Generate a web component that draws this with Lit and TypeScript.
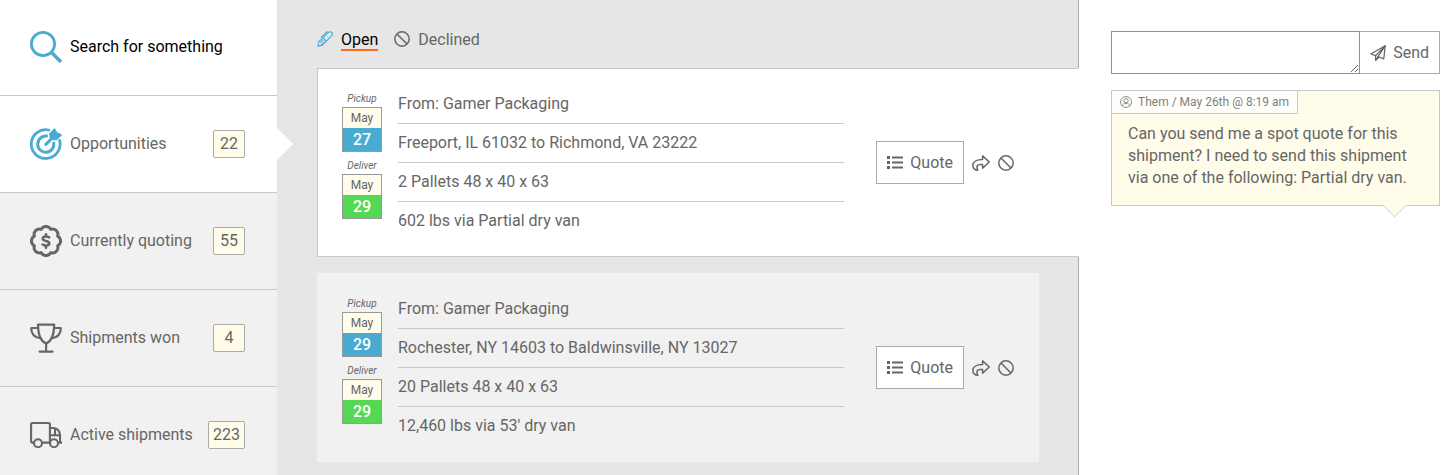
import { LitElement, html, svg, css, nothing } from "lit";
import { customElement, property } from "lit/decorators.js";
import { classMap } from "lit/directives/class-map.js";

const icons: Record<string, { box: string; body: unknown }> = {
  search: {
    box: "0 0 32 32",
    body: svg`<g fill="none" stroke="currentColor" stroke-width="2.8"><circle cx="13" cy="13" r="11.6"/><path d="M21.5 21.5 31 31" stroke-width="3.4"/></g>`,
  },
  target: {
    box: "0 0 32 32",
    body: svg`<g fill="none" stroke="currentColor" stroke-linecap="round">
      <path d="M18.8 2A14.4 14.4 0 1 0 29.6 12.4" stroke-width="2.8"/>
      <path d="M16.6 8.1A8.1 8.1 0 1 0 23.8 15" stroke-width="3"/>
      <path d="M15.8 16.4 23 9.2" stroke-width="3"/></g>
      <path fill="currentColor" d="M19.8 5.8 24.6 1 26.8 5 31.2 7 26.4 11.6 20.6 11.2Z" stroke="currentColor" stroke-width="1.4" stroke-linejoin="round"/>`,
  },
  seal: {
    box: "0 0 32 32",
    body: svg`<g fill="none" stroke="currentColor" stroke-width="3" stroke-linejoin="round" stroke-linecap="round">
      <path d="M11.18 4.36A5.4 5.4 0 0 1 20.82 4.36A5.4 5.4 0 0 1 27.64 11.18A5.4 5.4 0 0 1 27.64 20.82A5.4 5.4 0 0 1 20.82 27.64A5.4 5.4 0 0 1 11.18 27.64A5.4 5.4 0 0 1 4.36 20.82A5.4 5.4 0 0 1 4.36 11.18A5.4 5.4 0 0 1 11.18 4.36Z"/>
      <path d="M19.2 12.4C17 11 12.8 11.2 12.8 13.7 12.8 16.6 19.3 15.2 19.3 18.2 19.3 20.9 15 21 12.6 19.5M16 9.2V11.4M16 20.6V22.8" stroke-width="2.6"/></g>`,
  },
  trophy: {
    box: "0 0 32 32",
    body: svg`<g fill="none" stroke="currentColor" stroke-width="2.2" stroke-linejoin="round">
      <path d="M8 2.6H24.2C24.2 12 22.4 19 16.1 21.6 9.8 19 8 12 8 2.6Z"/>
      <path d="M8 6H1.2C1.2 11.6 4 15.4 10.4 16.2M24.2 6H30.8C30.8 11.6 28 15.4 21.8 16.2"/>
      <path d="M16.1 21.6V29.4M9.6 29.6H22.6" stroke-linecap="round"/></g>`,
  },
  truck: {
    box: "0 0 32 32",
    body: svg`<g fill="none" stroke="currentColor" stroke-width="2.1" stroke-linejoin="round">
      <path d="M3.8 23.6H2.6Q1.1 23.6 1.1 22.2V5.4Q1.1 4 2.6 4H18.4Q19.9 4 19.9 5.4V23.4M12.2 23.6H19.9M28.4 23.6H32M19.9 9H23.6C27.6 9 30 12.6 30 16.2V23.4M20 16.2H30M25 9.4V15.6"/>
      <circle cx="8" cy="24.2" r="4"/><circle cx="24" cy="24.2" r="4"/></g>`,
  },
  pen: {
    box: "0 0 16 16",
    body: svg`<g fill="none" stroke="currentColor" stroke-width="1.1" stroke-linejoin="round" stroke-linecap="round">
      <path d="M.8 15.3 1.7 11 11.4 1.4Q13 .2 14.7 1.3 16.2 3 14.8 4.6L5 14.3Z"/>
      <path d="M6 6.8 9.2 10M8.2 10.9 3 14.6M4.2 6.4 9.2 1.4Q10.2.4 11.4 1.4M4 11.4 6 9.4"/></g>`,
  },
  ban: {
    box: "0 0 16 16",
    body: svg`<g fill="none" stroke="currentColor" stroke-width="1.5"><circle cx="8" cy="8" r="7.2"/><path d="M3 3 13 13"/></g>`,
  },
  list: {
    box: "0 0 16 16",
    body: svg`<path fill="currentColor" d="M0 1H3V4H0ZM0 6H3V9H0ZM0 11H3V14H0ZM5 1.6H16V3.4H5ZM5 6.6H16V8.4H5ZM5 11.6H16V13.4H5Z"/>`,
  },
  share: {
    box: "0 0 18 16",
    body: svg`<path fill="none" stroke="currentColor" stroke-width="1.5" stroke-linejoin="round" d="M10.6.9 17.3 7 10.6 13.1V9.6C7.4 9.2 5.2 10.2 5 11.6 4.9 12.8 5.3 14 5.8 15.2 3.6 15.4.8 13.6.8 10.4.8 6.8 4.6 4.4 10.6 4.4Z"/>`,
  },
  plane: {
    box: "0 0 16 16",
    body: svg`<g fill="none" stroke="currentColor" stroke-width="1.3" stroke-linejoin="round"><path d="M15.2.8 13.8 13.8 9.2 12 5.6 15.3V10.6L.8 9Z"/><path d="M15.2.8 5.6 10.6M15.2.8 8 11.6M5.6 15.3 8 11.6 9.2 12"/></g>`,
  },
  user: {
    box: "0 0 16 16",
    body: svg`<g fill="none" stroke="currentColor" stroke-width="1.2"><circle cx="8" cy="8" r="7.3"/><circle cx="8" cy="6.3" r="2.9"/><path d="M3 13.2C3.4 11 5.4 10 8 10S12.6 11 13 13.2"/></g>`,
  },
};

const icon = (name: string, width = 16, height = width) =>
  svg`<svg width=${width} height=${height} viewBox=${icons[name].box} aria-hidden="true">${icons[name].body}</svg>`;

const base = css`
  * {
    box-sizing: border-box;
  }
  svg {
    display: block;
    flex: none;
  }
  button,
  input,
  textarea {
    font: inherit;
    color: inherit;
    border-radius: 0;
    margin: 0;
  }
  .button {
    display: flex;
    align-items: center;
    gap: 7px;
    height: 43px;
    padding: 0 10px;
    border: 1px solid #aaa;
    background: #fff;
    cursor: pointer;
  }
`;

interface Stop {
  label: string;
  month: string;
  day: string;
}

interface Shipment {
  stops: Stop[];
  lines: string[];
}

const sections = [
  { icon: "target", label: "Opportunities", count: 22, active: true },
  { icon: "seal", label: "Currently quoting", count: 55 },
  { icon: "trophy", label: "Shipments won", count: 4 },
  { icon: "truck", label: "Active shipments", count: 223 },
];

const shipments: Shipment[] = [
  {
    stops: [
      { label: "Pickup", month: "May", day: "27" },
      { label: "Deliver", month: "May", day: "29" },
    ],
    lines: [
      "From: Gamer Packaging",
      "Freeport, IL 61032 to Richmond, VA 23222",
      "2 Pallets 48 x 40 x 63",
      "602 lbs via Partial dry van",
    ],
  },
  {
    stops: [
      { label: "Pickup", month: "May", day: "29" },
      { label: "Deliver", month: "May", day: "29" },
    ],
    lines: [
      "From: Gamer Packaging",
      "Rochester, NY 14603 to Baldwinsville, NY 13027",
      "20 Pallets 48 x 40 x 63",
      "12,460 lbs via 53' dry van",
    ],
  },
];

@customElement("side-nav")
class SideNav extends LitElement {
  static styles = [
    base,
    css`
      :host {
        display: block;
        background: #f1f1f1;
      }
      .row {
        position: relative;
        display: flex;
        align-items: center;
        gap: 8px;
        height: 97px;
        padding: 0 32px 0 30px;
        border-bottom: 1px solid #c8c8c8;
        color: inherit;
        text-decoration: none;
      }
      .search {
        height: 96px;
        padding-bottom: 2px;
        background: #fff;
      }
      .icon {
        color: #666;
      }
      .search .icon,
      .active .icon {
        color: #4aabd2;
      }
      .field {
        flex: 1;
        min-width: 0;
        padding: 0;
        border: 0;
        outline: 0;
        background: none;
      }
      .field::placeholder {
        color: #000;
        opacity: 1;
      }
      .label {
        flex: 1;
        white-space: nowrap;
      }
      .count {
        min-width: 32px;
        padding: 0 4px;
        border: 1px solid #aaa;
        border-radius: 2px;
        background: #fffcea;
        line-height: 26px;
        text-align: center;
      }
      .active {
        background: #fff;
      }
      .active::after {
        content: "";
        position: absolute;
        left: 100%;
        top: 32px;
        border: 16px solid transparent;
        border-left-color: #fff;
        border-right-width: 0;
      }
    `,
  ];

  render() {
    return html`
      <label class="row search">
        <span class="icon">${icon("search", 32)}</span>
        <input class="field" type="search" placeholder="Search for something" aria-label="Search" />
      </label>
      <nav>
        ${sections.map(
          (s) => html`<a class=${classMap({ row: true, active: !!s.active })} href="#">
            <span class="icon">${icon(s.icon, 32)}</span>
            <span class="label">${s.label}</span>
            <span class="count">${s.count}</span>
          </a>`
        )}
      </nav>
    `;
  }
}

@customElement("shipment-card")
class ShipmentCard extends LitElement {
  @property({ attribute: false }) shipment?: Shipment;
  @property({ type: Boolean, reflect: true }) selected = false;

  static styles = [
    base,
    css`
      :host {
        display: block;
      }
      :host([selected]) {
        margin-right: -40px;
      }
      .card {
        display: flex;
        align-items: center;
        gap: 32px;
        padding: 16px 24px;
        border: 1px solid #f1f1f1;
        background: #f1f1f1;
      }
      :host([selected]) .card {
        padding-right: 64px;
        border-color: #c8c8c8;
        border-right-color: #fff;
        background: #fff;
      }
      .details {
        display: flex;
        flex: 1;
        gap: 16px;
        min-width: 0;
      }
      .stops {
        display: flex;
        flex: none;
        flex-direction: column;
        gap: 6px;
        width: 40px;
        padding-top: 6px;
        text-align: center;
      }
      .kind {
        font-size: 10px;
        font-style: italic;
        line-height: 16px;
      }
      .date {
        border: 1px solid #999;
      }
      .month {
        background: #fffcea;
        font-size: 12px;
        line-height: 20px;
      }
      .day {
        background: #4aabd2;
        color: #fff;
        font-weight: 500;
        line-height: 23px;
      }
      .stop:last-child .day {
        background: #55d955;
      }
      .lines {
        flex: 1;
        min-width: 0;
        margin: 0;
        padding: 0;
        list-style: none;
      }
      .line {
        line-height: 38px;
      }
      .line + .line {
        border-top: 1px solid #c8c8c8;
      }
      .actions {
        display: flex;
        align-items: center;
        gap: 8px;
      }
      .plain {
        padding: 0;
        border: 0;
        background: none;
        cursor: pointer;
      }
    `,
  ];

  render() {
    if (!this.shipment) return nothing;
    const { stops, lines } = this.shipment;
    return html`
      <article class="card">
        <div class="details">
          <div class="stops">
            ${stops.map(
              (s) => html`<div class="stop">
                <div class="kind">${s.label}</div>
                <div class="date">
                  <div class="month">${s.month}</div>
                  <div class="day">${s.day}</div>
                </div>
              </div>`
            )}
          </div>
          <ul class="lines">
            ${lines.map((l) => html`<li class="line">${l}</li>`)}
          </ul>
        </div>
        <div class="actions">
          <button class="button">${icon("list")}Quote</button>
          <button class="plain" aria-label="Forward">${icon("share", 18, 16)}</button>
          <button class="plain" aria-label="Decline">${icon("ban")}</button>
        </div>
      </article>
    `;
  }
}

@customElement("message-panel")
class MessagePanel extends LitElement {
  static styles = [
    base,
    css`
      :host {
        display: block;
        padding: 31px 13px 31px 32px;
      }
      .compose {
        display: flex;
        margin-bottom: 16px;
      }
      .draft {
        flex: 1;
        min-width: 0;
        height: 43px;
        padding: 8px;
        border: 1px solid #4aabd2;
        outline: 0;
        background: #fff;
        resize: vertical;
      }
      .send {
        border-left: 0;
      }
      .message {
        position: relative;
        border: 1px solid #c8c8c8;
        background: #fffcea;
      }
      .message::after {
        content: "";
        position: absolute;
        right: 36px;
        bottom: -9px;
        width: 16px;
        height: 16px;
        border: solid #dddcd3;
        border-width: 0 1px 1px 0;
        background: #fffcea;
        transform: rotate(45deg);
      }
      .meta {
        display: inline-flex;
        align-items: center;
        gap: 6px;
        padding: 0 8px;
        border: solid #c8c8c8;
        border-width: 0 1px 1px 0;
        background: #fffefa;
        color: #808080;
        font-size: 12px;
        line-height: 22px;
        vertical-align: top;
      }
      .text {
        margin: 0;
        padding: 9px 16px 16px;
        line-height: 22px;
      }
    `,
  ];

  render() {
    return html`
      <form class="compose" @submit=${(e: Event) => e.preventDefault()}>
        <textarea class="draft" rows="1" aria-label="Message"></textarea>
        <button class="button send">${icon("plane")}Send</button>
      </form>
      <article class="message">
        <div class="meta">${icon("user", 12)}Them / May 26th @ 8:19 am</div>
        <p class="text">
          Can you send me a spot quote for this shipment? I need to send this shipment via one of the
          following: Partial dry van.
        </p>
      </article>
    `;
  }
}

@customElement("app-root")
class AppRoot extends LitElement {
  static styles = [
    base,
    css`
      :host {
        display: grid;
        grid-template-columns: 277px minmax(0, 1fr) 374px;
        min-height: 100vh;
        background: #fff;
        color: #666;
        font: 16px/22px Roboto, sans-serif;
      }
      .board {
        padding: 31px 39px 13px 40px;
        border-right: 1px solid #aaa;
        background: #e6e6e6;
      }
      .tabs {
        display: flex;
        gap: 16px;
        margin-bottom: 17px;
      }
      .tab {
        display: flex;
        align-items: flex-start;
        gap: 8px;
        color: inherit;
        text-decoration: none;
      }
      .name {
        border-bottom: 2px solid transparent;
        line-height: 18px;
      }
      .current {
        color: #4aabd2;
      }
      .current .name {
        border-color: #ff6a1a;
        color: #000;
      }
      .cards {
        display: grid;
        gap: 16px;
      }
    `,
  ];

  render() {
    return html`
      <side-nav></side-nav>
      <main class="board">
        <nav class="tabs">
          <a class="tab current" href="#">${icon("pen")}<span class="name">Open</span></a>
          <a class="tab" href="#">${icon("ban")}<span class="name">Declined</span></a>
        </nav>
        <div class="cards">
          ${shipments.map(
            (s, i) => html`<shipment-card .shipment=${s} ?selected=${i === 0}></shipment-card>`
          )}
        </div>
      </main>
      <message-panel></message-panel>
    `;
  }
}
